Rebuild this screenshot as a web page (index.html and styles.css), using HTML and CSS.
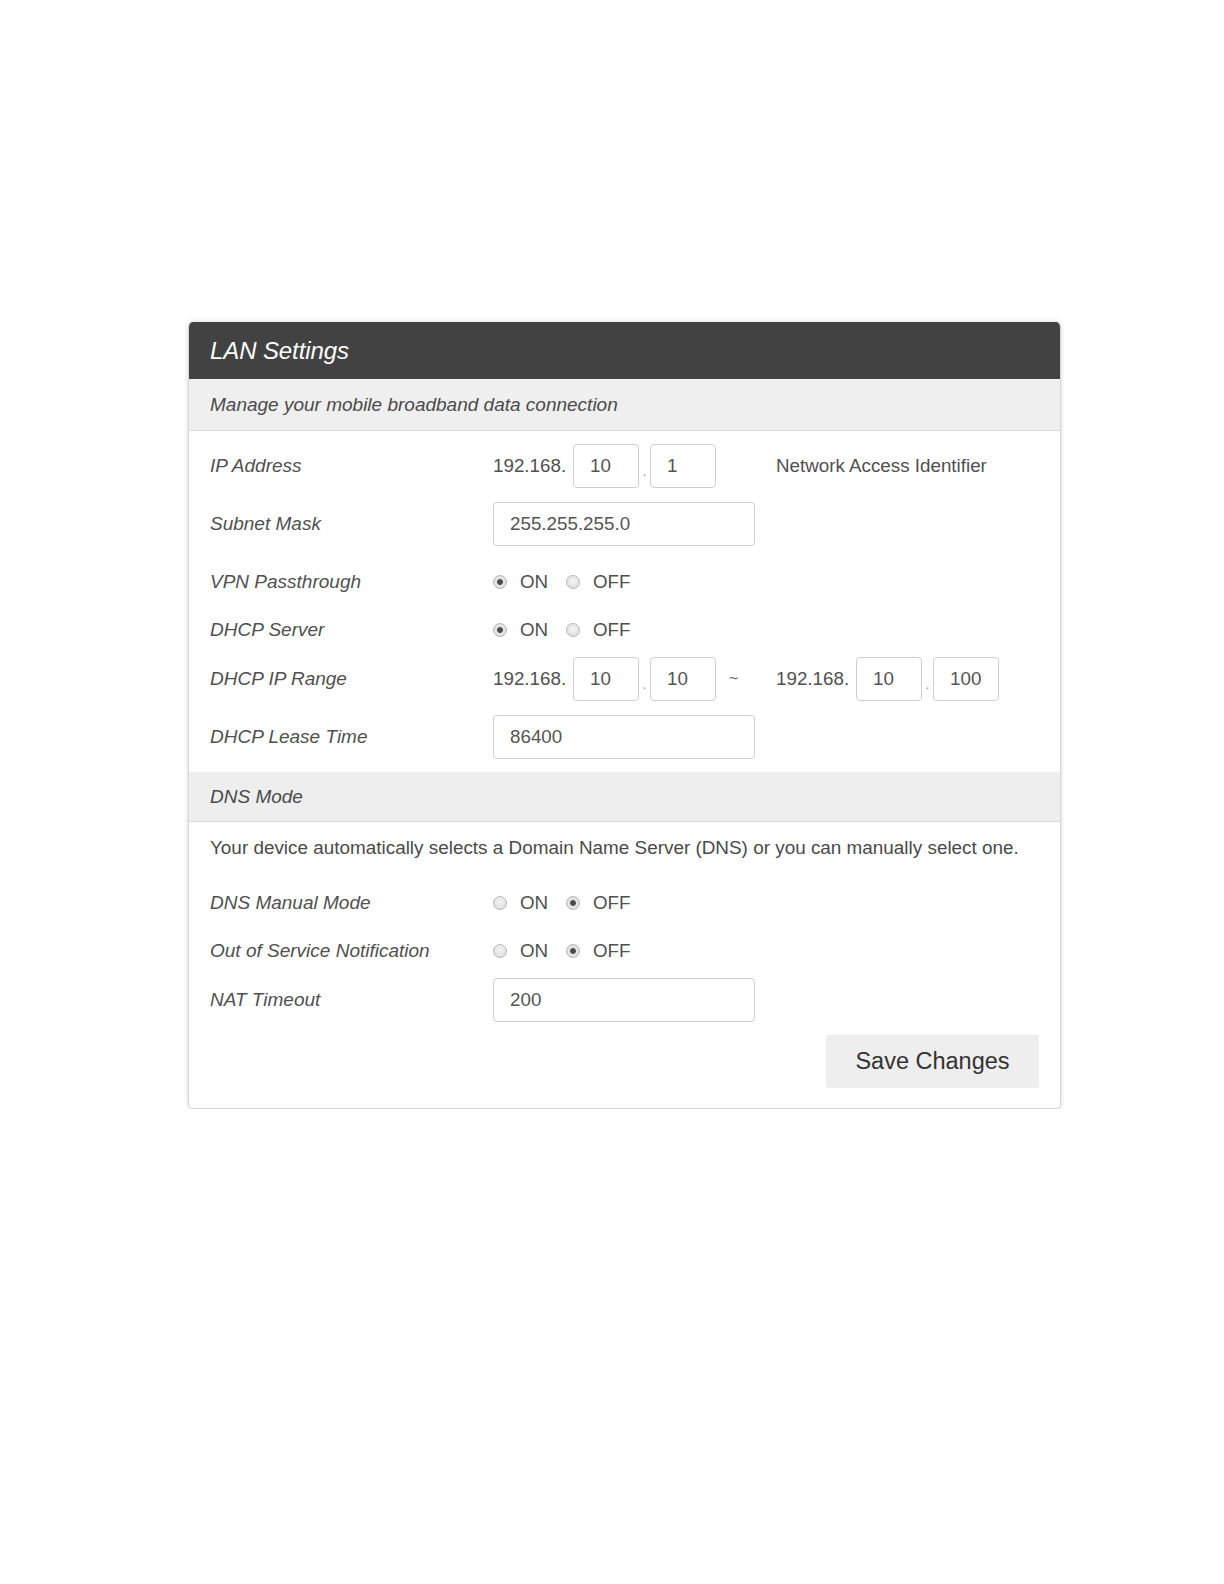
FILE: index.html
```html
<!DOCTYPE html>
<html>
<head>
<meta charset="utf-8">
<title>LAN Settings</title>
<link rel="stylesheet" href="styles.css">
</head>
<body>
<div class="card">
  <div class="card-head"><h1>LAN Settings</h1></div>
  <div class="card-sub">Manage your mobile broadband data connection</div>

  <div class="card-body first">
    <div class="row">
      <div class="label">IP Address</div>
      <div class="value">
        <span class="prefix">192.168.</span>
        <span class="box oct">10</span>
        <span class="dot">.</span>
        <span class="box oct">1</span>
        <span class="nai">Network Access Identifier</span>
      </div>
    </div>

    <div class="row">
      <div class="label">Subnet Mask</div>
      <div class="value"><span class="box wide">255.255.255.0</span></div>
    </div>

    <div class="row radio-row">
      <div class="label">VPN Passthrough</div>
      <div class="value">
        <span class="opt"><span class="radio checked"></span>ON</span>
        <span class="opt"><span class="radio"></span>OFF</span>
      </div>
    </div>

    <div class="row radio-row">
      <div class="label">DHCP Server</div>
      <div class="value">
        <span class="opt"><span class="radio checked"></span>ON</span>
        <span class="opt"><span class="radio"></span>OFF</span>
      </div>
    </div>

    <div class="row">
      <div class="label">DHCP IP Range</div>
      <div class="value">
        <span class="prefix">192.168.</span>
        <span class="box oct">10</span>
        <span class="dot">.</span>
        <span class="box oct">10</span>
        <span class="tilde">~</span>
        <span class="prefix">192.168.</span>
        <span class="box oct">10</span>
        <span class="dot">.</span>
        <span class="box oct">100</span>
      </div>
    </div>

    <div class="row">
      <div class="label">DHCP Lease Time</div>
      <div class="value"><span class="box wide">86400</span></div>
    </div>
  </div>

  <div class="band">DNS Mode</div>

  <div class="card-body second">
    <p class="note">Your device automatically selects a Domain Name Server (DNS) or you can manually select one.</p>

    <div class="row radio-row">
      <div class="label">DNS Manual Mode</div>
      <div class="value">
        <span class="opt"><span class="radio"></span>ON</span>
        <span class="opt"><span class="radio checked"></span>OFF</span>
      </div>
    </div>

    <div class="row radio-row">
      <div class="label">Out of Service Notification</div>
      <div class="value">
        <span class="opt"><span class="radio"></span>ON</span>
        <span class="opt"><span class="radio checked"></span>OFF</span>
      </div>
    </div>

    <div class="row">
      <div class="label">NAT Timeout</div>
      <div class="value"><span class="box wide">200</span></div>
    </div>

    <div class="actions">
      <button class="save" type="button">Save Changes</button>
    </div>
  </div>
</div>
</body>
</html>
```

FILE: styles.css
```css
* {
  box-sizing: border-box;
}

html, body {
  margin: 0;
  padding: 0;
  background: #ffffff;
}

body {
  font-family: "Liberation Sans", Arial, sans-serif;
  color: #505050;
  font-size: 18.8px;
}

.card {
  width: 873px;
  margin: 322px 0 0 188px;
  border: 1px solid #d6d6d6;
  border-top: none;
  border-radius: 5px;
  overflow: hidden;
  background: #ffffff;
  box-shadow: 0 0 5px rgba(0, 0, 0, 0.16);
}

.card-head {
  height: 57px;
  background: #424242;
  display: flex;
  align-items: center;
  padding: 0 21px;
}

.card-head h1 {
  margin: 0;
  font-size: 24px;
  font-weight: normal;
  font-style: italic;
  color: #ffffff;
  letter-spacing: -0.1px;
}

.card-sub {
  height: 52px;
  background: #efefef;
  border-bottom: 1px solid #dcdcdc;
  display: flex;
  align-items: center;
  padding: 0 21px;
  font-size: 19px;
  font-style: italic;
  color: #4a4a4a;
}

.card-body {
  padding: 0 21px;
}

.card-body.first {
  padding-top: 13px;
  padding-bottom: 13px;
}

.card-body.second {
  padding-top: 14px;
  padding-bottom: 20px;
}

.row {
  display: flex;
  align-items: center;
  height: 44px;
  margin-top: 14px;
}

.row:first-child {
  margin-top: 0;
}

.row.radio-row {
  height: 34px;
  margin-top: 19px;
}

.row.radio-row + .row.radio-row {
  margin-top: 14px;
}

.row.radio-row + .row:not(.radio-row) {
  margin-top: 10px;
}

.note + .row.radio-row {
  margin-top: 26px;
}

.label {
  width: 283px;
  flex: none;
  font-size: 19px;
  font-style: italic;
  color: #505050;
}

.value {
  display: flex;
  align-items: center;
  height: 100%;
  color: #505050;
}

.prefix {
  width: 80px;
  flex: none;
}

.box {
  display: flex;
  align-items: center;
  height: 44px;
  padding-left: 16px;
  border: 1px solid #cfcfcf;
  border-radius: 4px;
  background: #ffffff;
  color: #555555;
}

.box.oct {
  width: 66px;
}

.box.wide {
  width: 262px;
}

.dot {
  width: 11px;
  text-align: center;
  font-size: 14px;
  color: #9a9a9a;
  align-self: center;
  padding-top: 10px;
}

.tilde {
  width: 60px;
  padding-left: 13px;
  font-size: 16px;
  color: #666666;
}

.nai {
  margin-left: 60px;
}

.opt {
  display: flex;
  align-items: center;
  width: 73px;
}

.radio {
  width: 14px;
  height: 14px;
  border-radius: 50%;
  border: 1px solid #b9b9b9;
  background: radial-gradient(circle at 50% 40%, #f4f4f4 0%, #e2e2e2 65%, #d2d2d2 100%);
  margin-right: 13px;
  flex: none;
}

.radio.checked {
  background: radial-gradient(circle at 50% 50%, #444444 0%, #555555 30%, #e6e6e6 40%, #d8d8d8 100%);
}

.band {
  height: 50px;
  background: #eeeeee;
  border-bottom: 1px solid #dcdcdc;
  display: flex;
  align-items: center;
  padding: 0 21px;
  font-size: 19px;
  font-style: italic;
  color: #4a4a4a;
}

.note {
  margin: 0;
  font-size: 18.9px;
  line-height: 24px;
  color: #4a4a4a;
}

.actions {
  display: flex;
  justify-content: flex-end;
  margin-top: 13px;
}

.save {
  width: 213px;
  height: 53px;
  border: none;
  border-radius: 2px;
  background: #eeeeee;
  color: #333333;
  font-family: "Liberation Sans", Arial, sans-serif;
  font-size: 23.5px;
  padding: 0;
}
```
